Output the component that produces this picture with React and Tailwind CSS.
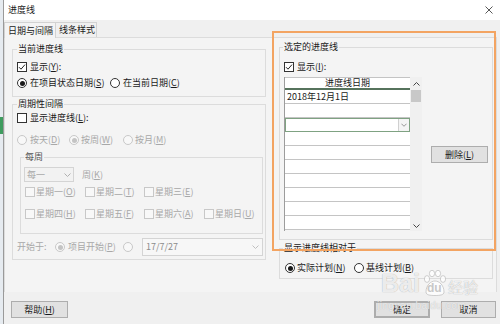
import React from 'react';

const K = ({ children }) => <u className="underline underline-offset-[1px]">{children}</u>;

function Check({ checked, disabled }) {
  return (
    <span
      className={`w-[10px] h-[10px] shrink-0 border flex items-center justify-center ${
        disabled ? 'border-[#c8c8c8] bg-[#f8f8f8]' : 'border-[#333333] bg-white'
      }`}
    >
      {checked && (
        <svg width="8" height="8" viewBox="0 0 8 8">
          <path d="M1 4.2 L3 6.2 L7 1.6" fill="none" stroke="#222" strokeWidth="1" />
        </svg>
      )}
    </span>
  );
}

function Radio({ checked, disabled }) {
  return (
    <span
      className={`w-[10px] h-[10px] shrink-0 rounded-full border flex items-center justify-center ${
        disabled ? 'border-[#c8c8c8] bg-[#f8f8f8]' : 'border-[#333333] bg-white'
      }`}
    >
      {checked && <span className={`w-[5px] h-[5px] rounded-full ${disabled ? 'bg-[#c4c4c4]' : 'bg-[#1a1a1a]'}`} />}
    </span>
  );
}

function Chev({ up, color = '#555', w = 7 }) {
  return (
    <svg width={w} height="4" viewBox="0 0 7 4">
      <path d={up ? 'M0.5 3.5 L3.5 0.5 L6.5 3.5' : 'M0.5 0.5 L3.5 3.5 L6.5 0.5'} fill="none" stroke={color} strokeWidth="1" />
    </svg>
  );
}

function Group({ title, className = '', legend = 'ml-[4px]', children }) {
  return (
    <fieldset className={`min-w-0 border border-[#dcdcdc] ${className}`}>
      <legend className={`${legend} px-[1px] leading-[12px]`}>{title}</legend>
      {children}
    </fieldset>
  );
}

function Btn({ children, className = '' }) {
  return (
    <button className={`h-[17px] flex items-center justify-center bg-[#e1e1e1] border border-[#adadad] leading-[12px] ${className}`}>
      {children}
    </button>
  );
}

const weekRows = [
  [
    ['星期一', 'O'],
    ['星期二', 'T'],
    ['星期三', 'E'],
  ],
  [
    ['星期四', 'H'],
    ['星期五', 'F'],
    ['星期六', 'A'],
    ['星期日', 'U'],
  ],
];

function LeftColumn() {
  return (
    <div className="w-[261px] shrink-0 pl-[7px] pt-[5px] flex flex-col">
      <Group title="当前进度线" className="w-[254px]">
        <div className="pl-[4px] pt-[6px] pb-[7px] flex flex-col gap-[4px]">
          <div className="h-[12px] flex items-center gap-[3px]">
            <Check checked />
            <span>显示(<K>Y</K>):</span>
          </div>
          <div className="h-[12px] flex items-center">
            <div className="flex items-center gap-[3px] w-[93px]">
              <Radio checked />
              <span>在项目状态日期(<K>S</K>)</span>
            </div>
            <div className="flex items-center gap-[3px]">
              <Radio />
              <span>在当前日期(<K>C</K>)</span>
            </div>
          </div>
        </div>
      </Group>

      <Group title="周期性间隔" className="w-[254px] mt-[1px]">
        <div className="pt-[2px] pb-[3px] flex flex-col">
          <div className="h-[12px] ml-[4px] flex items-center gap-[3px]">
            <Check />
            <span>显示进度线(<K>L</K>):</span>
          </div>
          <div className="h-[12px] ml-[4px] mt-[10px] flex items-center text-[#a8a8a8]">
            <div className="w-[52px] flex items-center gap-[3px]">
              <Radio disabled />
              <span>按天(<K>D</K>)</span>
            </div>
            <div className="w-[54px] flex items-center gap-[2px]">
              <Radio checked disabled />
              <span>按周(<K>W</K>)</span>
            </div>
            <div className="flex items-center gap-[2px]">
              <Radio disabled />
              <span>按月(<K>M</K>)</span>
            </div>
          </div>

          <Group title="每周" className="w-[243px] ml-[7px] mt-[5px] text-[#555]" legend="ml-[3px]">
            <div className="pl-[3px] pt-[4px] pb-[13px] flex flex-col">
              <div className="h-[15px] flex items-center text-[#a8a8a8]">
                <div className="w-[50px] h-[15px] border border-[#d4d4d4] bg-[#f2f2f2] flex items-center justify-between pl-[2px] pr-[2px]">
                  <span>每一</span>
                  <Chev color="#b0b0b0" />
                </div>
                <span className="ml-[8px]">周(<K>K</K>)</span>
              </div>
              <div className="ml-[1px] mt-[4px] flex flex-col gap-[10px] text-[#a8a8a8]">
                {weekRows.map((row, r) => (
                  <div key={r} className="grid grid-cols-[60px_59px_60px_auto]">
                    {row.map(([d, k]) => (
                      <div key={k} className="h-[12px] flex items-center gap-[1px]">
                        <Check disabled />
                        <span>
                          {d}(<K>{k}</K>)
                        </span>
                      </div>
                    ))}
                  </div>
                ))}
              </div>
            </div>
          </Group>

          <div className="h-[18px] ml-[4px] mt-[4px] flex items-center text-[#a8a8a8]">
            <span className="w-[38px]">开始于:</span>
            <div className="w-[68px] flex items-center gap-[3px]">
              <Radio checked disabled />
              <span>项目开始(<K>P</K>)</span>
            </div>
            <Radio disabled />
            <div className="ml-[9px] w-[121px] h-[18px] border border-[#d4d4d4] bg-[#f7f7f7] flex items-center justify-between pl-[3px] pr-[3px]">
              <span className="text-[#8c8c8c]">17/7/27</span>
              <Chev color="#c0c0c0" />
            </div>
          </div>
        </div>
      </Group>
    </div>
  );
}

function DateTable() {
  const rows = Array.from({ length: 10 });
  return (
    <div className="ml-[4px] w-[138px] h-[154px] flex border-l border-[#9c9c9c]">
      <div className="w-[126px] flex flex-col">
        <div className="h-[13px] bg-white border-t border-[#c4c4c4] border-b-2 border-b-[#56735c] flex items-center justify-center leading-[10px]">
          进度线日期
        </div>
        {rows.map((_, i) => (
          <div key={i} className="h-[14px] bg-white border-b border-[#c4c4c4] flex items-center">
            {i === 0 && <span className="pl-[2px] leading-[12px]">2018年12月1日</span>}
            {i === 2 && (
              <div className="w-full h-[14px] border border-[#7fa282] flex items-stretch justify-end">
                <div className="w-[11px] border-l border-[#d0d0d0] bg-[#f4f4f4] flex items-center justify-center">
                  <Chev color="#888" w={6} />
                </div>
              </div>
            )}
          </div>
        ))}
      </div>
      <div className="w-[12px] bg-[#f0f0f0] flex flex-col items-center">
        <div className="h-[13px] flex items-center justify-center">
          <Chev up color="#444" />
        </div>
        <div className="w-[10px] h-[12px] bg-[#c8c8c8]" />
        <div className="flex-1" />
        <div className="h-[10px] flex items-center justify-center">
          <Chev color="#444" />
        </div>
      </div>
    </div>
  );
}

function RightColumn() {
  return (
    <div className="ml-[13px] pt-[3px] flex flex-col">
      <Group title="选定的进度线" className="w-[214px]" legend="ml-[3px]">
        <div className="pt-[8px] pb-[8px] flex flex-col">
          <div className="h-[12px] ml-[4px] flex items-center gap-[3px]">
            <Check checked />
            <span>显示(<K>I</K>):</span>
          </div>
          <div className="mt-[4px] flex items-start">
            <DateTable />
            <Btn className="ml-[9px] mt-[69px] w-[57px]">
              删除(<K>L</K>)
            </Btn>
          </div>
        </div>
      </Group>
      <Group title="显示进度线相对于" className="w-[214px] mt-[2px]" legend="ml-[3px]">
        <div className="pt-[8px] pb-[4px] ml-[5px] h-[24px] flex items-center">
          <div className="w-[69px] flex items-center gap-[2px]">
            <Radio checked />
            <span>实际计划(<K>N</K>)</span>
          </div>
          <div className="flex items-center gap-[2px]">
            <Radio />
            <span>基线计划(<K>B</K>)</span>
          </div>
        </div>
      </Group>
    </div>
  );
}

function Watermark() {
  return (
    <div className="absolute left-[381px] top-[270px] pointer-events-none select-none">
      <div className="flex items-end">
        <span className="text-[25px] leading-[26px] font-bold font-['Liberation_Sans',sans-serif] text-white/80 [text-shadow:0_0_1px_#9a9a9a]">
          Bai
        </span>
        <div className="relative w-[23px] h-[26px] ml-[3px]">
          <svg width="23" height="26" viewBox="0 0 23 26" className="absolute inset-0">
            <g fill="rgba(255,255,255,0.8)" stroke="#b0b0b0" strokeWidth="0.6">
              <ellipse cx="4" cy="9" rx="2.6" ry="3.4" />
              <ellipse cx="9" cy="3.5" rx="2.6" ry="3.2" />
              <ellipse cx="15" cy="3.5" rx="2.6" ry="3.2" />
              <ellipse cx="20" cy="9" rx="2.6" ry="3.4" />
              <path d="M3 22 C3 15 8 11 12 11 C16 11 21 15 21 22 C21 25 17 25.5 12 25.5 C7 25.5 3 25 3 22 Z" />
            </g>
          </svg>
          <span className="absolute left-[4px] top-[12px] text-[12px] leading-[12px] font-bold font-['Liberation_Sans',sans-serif] text-[#c8c8c8]">
            du
          </span>
        </div>
        <span className="ml-[2px] mb-[1px] text-[15px] leading-[16px] text-white/80 [text-shadow:0_0_1px_#9a9a9a]">经验</span>
      </div>
      <div className="mt-[5px] ml-[-4px] text-[10px] leading-[10px] tracking-[0.5px] font-['Liberation_Sans',sans-serif] text-white/70 [text-shadow:0_0_1px_#b0b0b0]">
        jingyan.baidu.com
      </div>
    </div>
  );
}

export default function App() {
  return (
    <div className="relative w-[500px] h-[324px] overflow-hidden flex bg-[#f0f0f0] text-[9px] leading-[12px] text-[#1a1a1a] font-['Noto_Sans_CJK_SC',sans-serif]">
      <div className="w-[3px] shrink-0 bg-[#e6ebf0] flex flex-col">
        <div className="h-[117px]" />
        <div className="h-[17px] bg-[#3f9c5f]" />
      </div>
      <div className="flex-1 flex flex-col border-l border-[#9a9a9a]">
        <div className="h-[20px] bg-white flex items-center justify-between pl-[4px] pr-[7px]">
          <span className="text-[#222]">进度线</span>
          <svg width="8" height="8" viewBox="0 0 8 8">
            <path d="M0.5 0.5 L7.5 7.5 M7.5 0.5 L0.5 7.5" stroke="#444" strokeWidth="0.9" />
          </svg>
        </div>

        <div className="mt-[2px] h-[15px] flex relative z-10">
          <div className="w-[52px] h-[16px] border-l border-t border-r border-[#d2d2d2] bg-[#f4f4f4] pl-[3px] flex items-center">
            日期与间隔
          </div>
          <div className="w-[41px] h-[15px] border-t border-r border-[#d2d2d2] pl-[3px] flex items-center">
            线条样式
          </div>
        </div>

        <div className="w-[493px] h-[255px] border border-b-0 border-[#dcdcdc] bg-[#f4f4f4] flex">
          <LeftColumn />
          <RightColumn />
        </div>

        <div className="mt-[9px] pl-[7px] pr-[4px] flex items-center">
          <Btn className="w-[57px]">
            帮助(<K>H</K>)
          </Btn>
          <div className="flex-1" />
          <Btn className="w-[56px] border-2 border-[#4a8fd6]">确定</Btn>
          <Btn className="w-[55px] ml-[11px]">取消</Btn>
        </div>
      </div>

      <div className="absolute left-[272px] top-[31px] w-[224px] h-[220px] border-2 border-[#f3a462] pointer-events-none" />
      <Watermark />
    </div>
  );
}
